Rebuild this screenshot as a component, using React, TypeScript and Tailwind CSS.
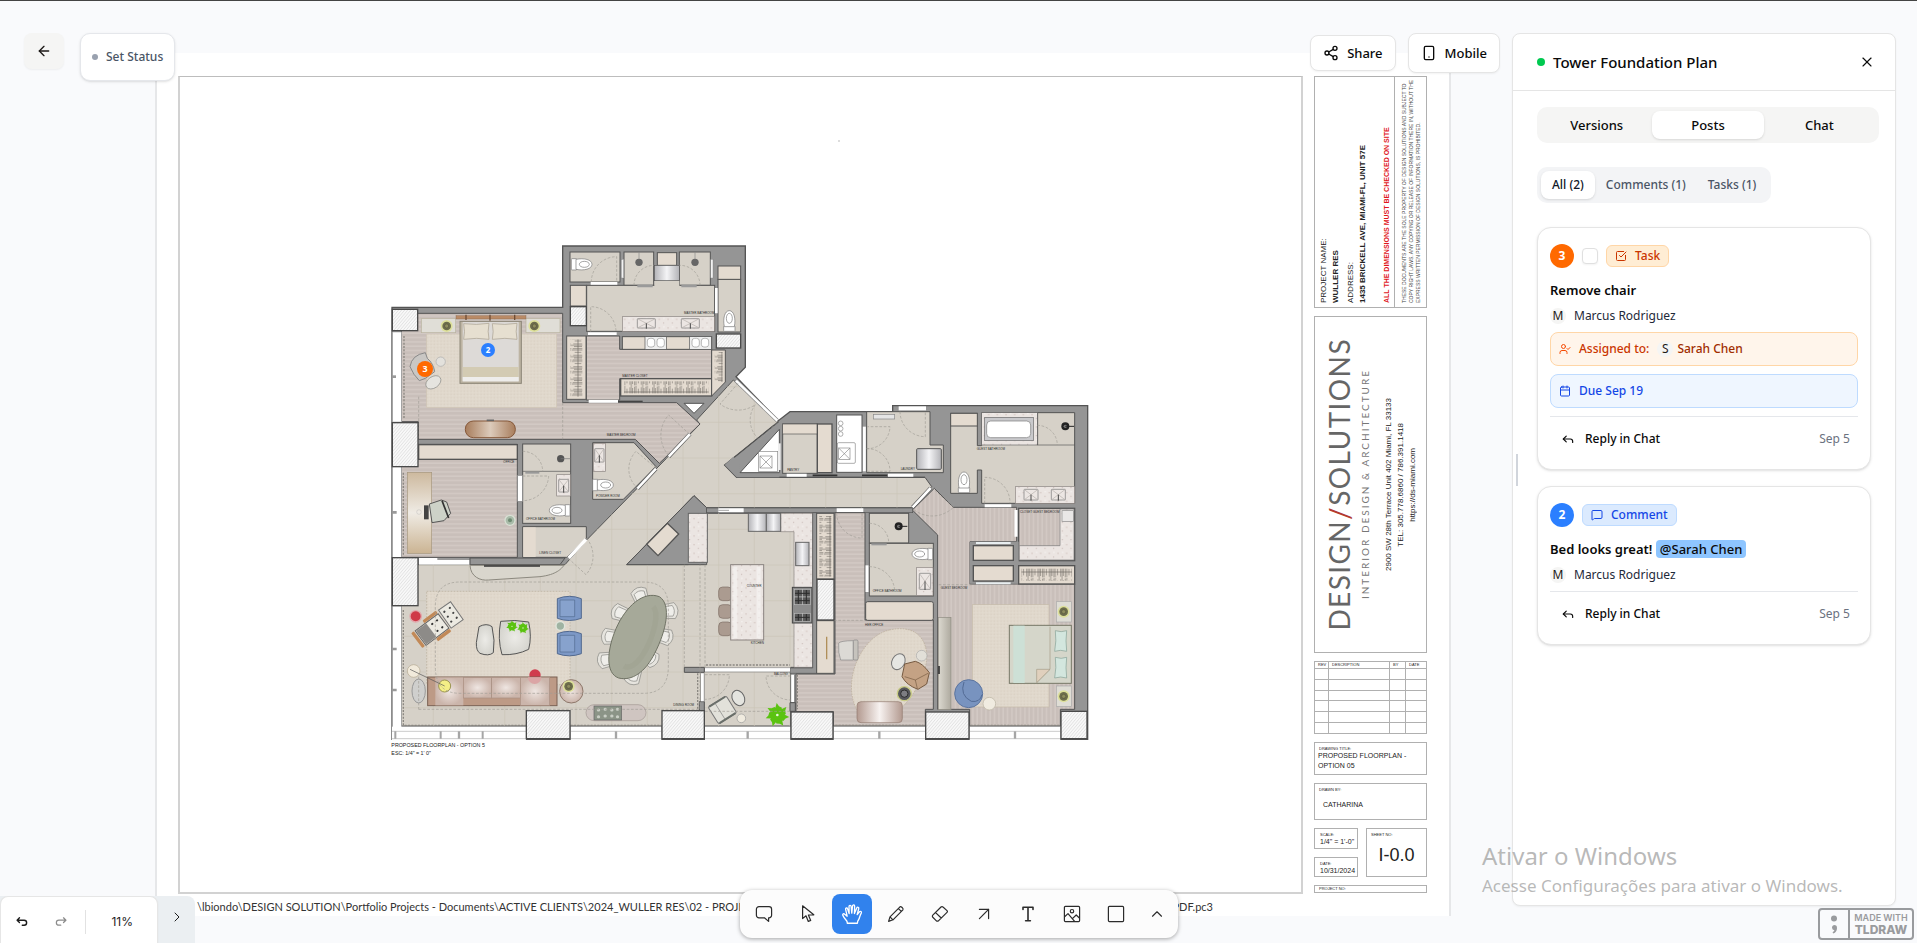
import React from "react";
import {
  ArrowLeft,
  ArrowUpRight,
  Calendar,
  ChevronRight,
  ChevronUp,
  MessageSquare,
  Reply,
  Share2,
  Smartphone,
  SquareCheckBig,
  UserCheck,
  X,
} from "lucide-react";

/* ---------- Floor plan drawing ---------- */

type Pt = [number, number];

const WALL = "#959595";
const LINE = "#545454";
const TILE = "#d6d1c8";
const CREAM = "#e4dbd0";

function Room({ d, fill, w = 3 }: { d: string; fill: string; w?: number }) {
  return <path d={d} fill={fill} stroke={LINE} strokeWidth={w} strokeLinejoin="miter" />;
}

function Box({
  x,
  y,
  w,
  h,
  fill = CREAM,
  s = 3,
  stroke = LINE,
  rx = 0,
}: {
  x: number;
  y: number;
  w: number;
  h: number;
  fill?: string;
  s?: number;
  stroke?: string;
  rx?: number;
}) {
  return <rect x={x} y={y} width={w} height={h} rx={rx} fill={fill} stroke={stroke} strokeWidth={s} />;
}

function Toilet({ x, y, r = 0 }: { x: number; y: number; r?: number }) {
  return (
    <g transform={`translate(${x} ${y}) rotate(${r})`} fill="#fff" stroke="#777" strokeWidth="2">
      <rect x="-17" y="14" width="34" height="16" rx="2" />
      <path d="M-15 16C-20-8-14-32 0-32S20-8 15 16Z" />
      <ellipse cx="0" cy="-9" rx="9" ry="15" />
    </g>
  );
}

function Sink({ x, y, w, h }: { x: number; y: number; w: number; h: number }) {
  return (
    <g fill="#ece6e3" stroke="#777" strokeWidth="2">
      <rect x={x} y={y} width={w} height={h} rx="2" />
      <path d={`M${x} ${y}L${x + w} ${y + h}M${x + w} ${y}L${x} ${y + h}`} stroke="#b5afab" />
      <path d={`M${x + w / 2} ${y + h / 2}v${h / 2 + 2}`} stroke="#444" strokeWidth="3" />
    </g>
  );
}

function Shower({ x, y, c = "#222" }: { x: number; y: number; c?: string }) {
  return (
    <g>
      <circle cx={x} cy={y} r="12" fill={c} />
      <circle cx={x} cy={y} r="5" fill="#777" />
      <path d={`M${x} ${y}h26`} stroke={c} strokeWidth="3" />
    </g>
  );
}

function Lamp({ x, y }: { x: number; y: number }) {
  return (
    <g>
      <circle cx={x} cy={y} r="18" fill="#dde09a" />
      <circle cx={x} cy={y} r="13" fill="#6d6d4c" />
      <circle cx={x} cy={y} r="6" fill="#8d8c5c" stroke="#3a3a2a" />
    </g>
  );
}

function DiningChair({ x, y, r }: { x: number; y: number; r: number }) {
  return (
    <g transform={`translate(${x} ${y}) rotate(${r})`} fill="#e6e4de" stroke="#8a8a86" strokeWidth="2">
      <path d="M-24-14Q0-34 24-14L20 22Q0 30-20 22Z" />
      <path d="M-16-8Q0-18 16-8L14 20H-14Z" fill="#efeeea" />
    </g>
  );
}

function Plant({ x, y, s = 1 }: { x: number; y: number; s?: number }) {
  const leaves = [0, 51, 103, 154, 206, 257, 309];
  return (
    <g transform={`translate(${x} ${y}) scale(${s})`} fill="#5bc311">
      {leaves.map((a) => (
        <path key={a} transform={`rotate(${a})`} d="M-9 0L-14-18L-6-22L-2-37L5-27L14-22L10 0Z" />
      ))}
      <circle r="14" />
      <circle r="4" fill="#e9f7dc" />
    </g>
  );
}

const COLUMNS: [number, number, number, number][] = [
  [37, 238, 76, 64],
  [37, 578, 77, 132],
  [37, 983, 77, 144],
  [439, 1442, 131, 84],
  [846, 1442, 127, 84],
  [1233, 1446, 126, 80],
  [1637, 1446, 130, 80],
  [2043, 1444, 78, 82],
  [571, 230, 48, 57],
  [1009, 312, 73, 42],
  [1311, 1048, 51, 122],
];

const WINDOWS_BOTTOM: [number, number][] = [
  [36, 438],
  [572, 844],
  [975, 1231],
  [1361, 1635],
  [1769, 2041],
];

const LABELS: [number, number, string][] = [
  [680, 618, "MASTER BEDROOM"],
  [912, 253, "MASTER BATHROOM"],
  [727, 442, "MASTER CLOSET"],
  [370, 698, "OFFICE"],
  [438, 870, "OFFICE BATHROOM"],
  [478, 971, "LINEN CLOSET"],
  [648, 800, "POWDER ROOM"],
  [880, 1429, "DINING ROOM"],
  [1112, 1241, "KITCHEN"],
  [1100, 1071, "COUNTER"],
  [1182, 1336, "BALCONY"],
  [1222, 724, "PANTRY"],
  [1562, 719, "LAUNDRY"],
  [1790, 661, "GUEST BATHROOM"],
  [1920, 849, "CLOSET GUEST BEDROOM"],
  [1682, 1078, "GUEST BEDROOM"],
  [1478, 1085, "OFFICE BATHROOM"],
  [1455, 1189, "HER OFFICE"],
];

const DINING: [number, number, number][] = [
  [780, 1096, -20],
  [718, 1148, -70],
  [688, 1220, -85],
  [676, 1290, -100],
  [758, 1340, -160],
  [812, 1285, 125],
  [855, 1220, 105],
  [870, 1143, 85],
];

const DOORS = [
  "M634 156A76 76 0 0 1 710 80V156",
  "M762 166A60 60 0 0 1 822 106",
  "M960 166A60 60 0 0 0 898 106",
  "M632 305V230A76 76 0 0 1 708 305",
  "M928 612L866 555A90 90 0 0 0 866 676",
  "M428 664A60 60 0 0 1 488 724",
  "M428 738H506A78 78 0 0 1 428 812",
  "M828 714L768 664A76 76 0 0 0 770 772",
  "M620 925A84 84 0 0 1 618 1034L566 986",
  "M1074 460L1020 522A90 90 0 0 0 1126 524A76 76 0 0 0 1140 630L1192 576",
  "M1560 545A76 76 0 0 0 1636 620V545",
  "M1460 656A68 68 0 0 0 1530 590H1462M1460 656A68 68 0 0 1 1530 724H1462",
  "M1972 586A60 60 0 0 1 2032 645",
  "M1814 820V742A76 76 0 0 1 1890 820",
  "M1655 772L1720 832A90 90 0 0 1 1598 836",
  "M1370 850A76 76 0 0 0 1446 924V850",
  "M1468 880A58 58 0 0 1 1526 938",
  "M1468 1010A76 76 0 0 1 1544 1082",
  "M975 1334H1048A74 74 0 0 1 975 1408",
  "M1232 1338H1158A74 74 0 0 0 1232 1410",
  "M116 1438H960V1004M913 1004V1312M975 1004V1312",
  "M116 500V628M548 518V628M116 1340V1438",
  "M240 1056H790Q865 1056 865 1130V1310Q865 1390 790 1390H240Q166 1390 166 1310V1130Q166 1056 240 1056",
  "M1362 1171H1455M1676 1064H1780M975 1444H1232",
];

function FloorPlan() {
  const grid: Pt[] = [];
  for (let i = 0; i < 20; i++) grid.push([160 + i * 107, 470 + i * 107]);
  return (
    <svg viewBox="0 0 2160 1620" className="block h-[540px] w-[720px]" role="img" aria-label="Proposed floorplan">
      <defs>
        <pattern id="wood" width="40" height="13" patternUnits="userSpaceOnUse">
          <rect width="40" height="13" fill="#c9bfba" />
          <rect y="9" width="40" height="3" fill="#d8cfca" />
        </pattern>
        <pattern id="woodV" width="13" height="40" patternUnits="userSpaceOnUse">
          <rect width="13" height="40" fill="#c9bfba" />
          <rect x="9" width="3" height="40" fill="#d8cfca" />
        </pattern>
        <pattern id="hatch" width="7" height="7" patternUnits="userSpaceOnUse" patternTransform="rotate(40)">
          <rect width="7" height="7" fill="#f8f8f8" />
          <rect width="2" height="7" fill="#dfdfdf" />
        </pattern>
        <pattern id="rug" width="10" height="10" patternUnits="userSpaceOnUse">
          <rect width="10" height="10" fill="#e0d8cc" />
          <circle cx="3" cy="3" r="1.5" fill="#d5cbbc" />
          <circle cx="8" cy="7" r="1.5" fill="#e8e1d6" />
        </pattern>
        <pattern id="marble" width="26" height="26" patternUnits="userSpaceOnUse">
          <rect width="26" height="26" fill="#ebe5e2" />
          <circle cx="6" cy="8" r="2" fill="#cdbdb8" />
          <circle cx="19" cy="19" r="2" fill="#c7b8b4" />
          <circle cx="20" cy="5" r="2" fill="#f8f5f4" />
        </pattern>
        <pattern id="rail" width="34" height="36" patternUnits="userSpaceOnUse">
          <path d="M2 4v28M6 0v36M10 6v24M16 2v32M20 0v34M27 8v20" stroke="#7d7771" strokeWidth="2" />
          <path d="M0 18h34" stroke="#6b655f" strokeWidth="2" />
        </pattern>
        <pattern id="railV" width="36" height="34" patternUnits="userSpaceOnUse">
          <path d="M4 2h28M0 6h36M6 10h24M2 16h32M0 20h34M8 27h20" stroke="#7d7771" strokeWidth="2" />
          <path d="M18 0v34" stroke="#6b655f" strokeWidth="2" />
        </pattern>
        <linearGradient id="steel">
          <stop offset="0" stopColor="#b3b3b7" />
          <stop offset=".5" stopColor="#f4f4f6" />
          <stop offset="1" stopColor="#b3b3b7" />
        </linearGradient>
        <linearGradient id="walnut">
          <stop offset="0" stopColor="#a87d5c" />
          <stop offset=".5" stopColor="#dccbbb" />
          <stop offset="1" stopColor="#a87d5c" />
        </linearGradient>
        <linearGradient id="desk" x2="0" y2="1">
          <stop offset="0" stopColor="#cdb99e" />
          <stop offset=".5" stopColor="#efebe4" />
          <stop offset="1" stopColor="#cbb493" />
        </linearGradient>
        <linearGradient id="tv">
          <stop offset="0" stopColor="#dcd9d0" />
          <stop offset="1" stopColor="#aeaa9f" />
        </linearGradient>
        <radialGradient id="seat">
          <stop offset="0" stopColor="#efe6e2" />
          <stop offset="1" stopColor="#cbb5ab" />
        </radialGradient>
        <radialGradient id="stone">
          <stop offset="0" stopColor="#ecebe7" />
          <stop offset="1" stopColor="#d6d5cf" />
        </radialGradient>
        <linearGradient id="pouf">
          <stop offset="0" stopColor="#b39a90" />
          <stop offset=".5" stopColor="#f7f2f0" />
          <stop offset="1" stopColor="#b39a90" />
        </linearGradient>
        <clipPath id="mainFloor">
          <path d="M64 1004H555L620 930L960 582L950 570L1060 450L1195 575L1034 705L1070 742H1635L1655 770L1595 833H980L942 797L740 1004H925V850H1298V1312H1232V1488H64Z" />
        </clipPath>
      </defs>

      <Room
        fill={WALL}
        w={4}
        d="M548 48H1096V412L1068 440L1195 572L1230 545H1538V527H2123V1528H36V232H548Z"
      />

      {/* Shared tiled floor */}
      <Room
        fill={TILE}
        d="M64 1004H555L620 930L960 582L950 570L1060 450L1195 575L1034 705L1070 742H1635L1655 770L1595 833H980L942 797L740 1004H925V850H1298V1312H1232V1488H64Z"
      />
      <g clipPath="url(#mainFloor)" stroke="#cbc6b8" strokeWidth="2">
        {grid.map(([gx, gy]) => (
          <path key={gx} d={`M${gx} 430V1500M40 ${gy}H1700`} />
        ))}
      </g>
      <path d="M1195 575L1034 705L1070 742H1635" fill="none" stroke={LINE} strokeWidth="4" />
      <path d="M1034 705L1060 680L1078 696L1080 728H1198V742H1070Z" fill={WALL} />

      {/* Master bedroom */}
      <Room fill="url(#wood)" d="M64 250H548V518H890L960 582L838 700L766 628H115V575H64Z" />
      <rect x="38" y="306" width="26" height="270" fill="#fff" stroke="#aaa" strokeWidth="2" />
      <path d="M36 440h12" stroke="#999" strokeWidth="8" />
      <rect x="140" y="312" width="390" height="220" fill="url(#rug)" stroke="#cfc5b5" strokeWidth="2" />
      <rect x="124" y="266" width="103" height="42" fill="#e0ded7" stroke="#b9b39f" strokeWidth="2" />
      <rect x="438" y="266" width="102" height="42" fill="#e0ded7" stroke="#b9b39f" strokeWidth="2" />
      <rect x="228" y="257" width="210" height="10" fill="#b98a66" stroke="#7b5a40" />
      <path d="M258 254v16M330 254v18M404 254v16" stroke="#6e4d36" strokeWidth="4" />
      <rect x="240" y="274" width="184" height="186" fill="#bdb4a3" stroke="#8b8577" strokeWidth="3" />
      <rect x="248" y="276" width="168" height="178" fill="#dddad7" />
      <rect x="248" y="411" width="168" height="30" fill="#d3cbb3" />
      <rect x="248" y="441" width="168" height="13" fill="#eeedeb" />
      <path d="M251 281Q290 286 327 280Q322 305 327 328Q290 322 251 328Q256 305 251 281Z" fill="#e6dfd0" stroke="#a79f8c" strokeWidth="2" />
      <path d="M337 281Q375 286 411 280Q406 305 411 328Q375 322 337 328Q342 305 337 281Z" fill="#e6dfd0" stroke="#a79f8c" strokeWidth="2" />
      <Lamp x={200} y={288} />
      <Lamp x={463} y={288} />
      <rect x="256" y="573" width="150" height="50" rx="24" fill="url(#walnut)" stroke="#85583a" strokeWidth="3" />
      <path d="M320 571h22" stroke="#666" strokeWidth="5" />
      <path d="M90 410Q95 375 136 368L142 385Q160 400 164 425L136 445L118 452Q100 435 90 410Z" fill="#c9c7c4" stroke="#888" strokeWidth="3" />
      <circle cx="182" cy="395" r="14" fill="#e3e1dc" stroke="#aaa" strokeWidth="2" />
      <ellipse cx="160" cy="457" rx="25" ry="17" transform="rotate(-35 160 457)" fill="#e5e4df" stroke="#8c8c88" strokeWidth="2" />

      {/* Master bathroom */}
      <Box x={570} y={66} w={150} h={90} fill={TILE} />
      <Box x={732} y={66} w={89} h={100} fill={TILE} />
      <Box x={898} y={66} w={93} h={100} fill={TILE} />
      <Box x={620} y={166} w={384} h={138} fill={TILE} />
      <rect x="823" y="150" width="75" height="20" fill={TILE} />
      <Box x={832} y={68} w={58} h={38} />
      <Box x={823} y={106} w={75} h={46} fill="url(#steel)" s={2} />
      <Box x={571} y={166} w={48} h={62} />
      <Box x={1014} y={148} w={68} h={158} fill={TILE} />
      <Box x={1014} y={108} w={68} h={40} />
      <Box x={727} y={260} w={276} h={44} fill="url(#marble)" s={2} stroke="#8a8380" />
      <Sink x={772} y={266} w={54} h={28} />
      <Sink x={904} y={266} w={54} h={28} />
      <Toilet x={604} y={103} r={90} />
      <Toilet x={1048} y={274} />
      <circle cx="777" cy="97" r="11" fill="#666" />
      <circle cx="945" cy="97" r="11" fill="#666" />
      <path d="M777 66v22M945 66v22" stroke="#888" strokeWidth="2" />
      <rect x="724" y="88" width="7" height="56" fill="#f2f2f2" stroke="#777" />
      <rect x="992" y="88" width="7" height="56" fill="#f2f2f2" stroke="#777" />
      <path d="M772 168h46M904 168h46" stroke="#9a9a9a" strokeWidth="7" />
      <path d="M632 160h80M624 311h86M1009 174v76" stroke="#fff" strokeWidth="8" />

      {/* Master closet */}
      <Room fill="url(#wood)" d="M619 318H719V358H995V446H719V510H619Z" />
      <Box x={560} y={318} w={58} h={190} />
      <rect x="571" y="328" width="36" height="172" fill="url(#railV)" />
      <Box x={727} y={320} w={268} h={38} />
      <Box x={795} y={320} w={64} h={38} fill="#eee" s={2} />
      <Box x={928} y={320} w={66} h={38} fill="#eee" s={2} />
      <g fill="#fff" stroke="#999" strokeWidth="2">
        <rect x="802" y="325" width="22" height="26" rx="8" />
        <rect x="831" y="325" width="22" height="26" rx="8" />
        <rect x="936" y="325" width="22" height="26" rx="8" />
        <rect x="964" y="325" width="22" height="26" rx="8" />
      </g>
      <Box x={722} y={446} w={273} h={52} s={4} />
      <rect x="732" y="454" width="254" height="36" fill="url(#rail)" />
      <Room fill={CREAM} d="M995 360H1036V456L995 498Z" />
      <rect x="1004" y="366" width="24" height="90" fill="url(#railV)" />
      <path d="M626 514h88" stroke="#fff" strokeWidth="9" />
      <path d="M714 514h74" stroke="#444" strokeWidth="4" />
      <path d="M912 520H972L942 550Z" fill="#fff" stroke={LINE} strokeWidth="3" />
      <path d="M1068 452L1192 572" stroke="#888" strokeWidth="12" />
      <path d="M1068 452L1192 572" stroke="#fff" strokeWidth="8" />
      <path d="M866 680L930 612" stroke={LINE} strokeWidth="12" />
      <path d="M866 680L930 612" stroke="#fff" strokeWidth="8" />

      {/* Office */}
      <Room fill="url(#wood)" d="M64 643H412V982H64Z" />
      <rect x="38" y="710" width="26" height="272" fill="#fff" stroke="#aaa" strokeWidth="2" />
      <Box x={116} y={644} w={296} h={44} s={4} />
      <rect x="82" y="727" width="73" height="243" fill="url(#desk)" stroke="#a5967d" strokeWidth="2" />
      <path d="M132 826h14v42h-14Z" fill="#444" />
      <circle cx="117" cy="846" r="7" fill="none" stroke="#aaa" />
      <path d="M148 822L184 810L200 816L212 850L192 872L156 878Z" fill="#cdd2c8" stroke="#555" strokeWidth="3" />
      <path d="M186 812L206 864" stroke="#333" strokeWidth="5" />
      <circle cx="390" cy="871" r="15" fill="#a9bba9" stroke="#d8e0d4" strokeWidth="4" />
      <circle cx="390" cy="871" r="6" fill="#6f8c73" />
      <rect x="117" y="984" width="152" height="20" fill="#fff" />
      <path d="M172 987h146" stroke="#777" strokeWidth="5" />

      {/* Office bathroom, linen closet, powder room */}
      <Box x={428} y={642} w={144} h={238} fill={TILE} />
      <path d="M428 724h144" stroke={LINE} strokeWidth="2" />
      <circle cx="542" cy="686" r="11" fill="#555" />
      <path d="M542 686h30" stroke="#777" strokeWidth="2" />
      <Box x={530} y={734} w={41} h={64} fill="url(#marble)" s={2} stroke="#8a8380" />
      <Sink x={536} y={748} w={30} h={38} />
      <Toilet x={540} y={841} r={-90} />
      <rect x="413" y="736" width="14" height="78" fill="#fff" stroke="#888" strokeWidth="2" />
      <path d="M436 728h42" stroke="#999" strokeWidth="6" />
      <Room fill={TILE} d="M428 890H619V925L560 982H428Z" />
      <rect x="430" y="892" width="37" height="89" fill={CREAM} />
      <path d="M566 984L618 928" stroke="#fff" strokeWidth="10" />
      <Room fill={TILE} d="M638 638H762L828 710L730 808H638Z" />
      <Box x={640} y={640} w={36} h={84} fill="url(#marble)" s={2} stroke="#8a8380" />
      <Sink x={644} y={656} w={28} h={40} />
      <Toilet x={668} y={765} r={90} />
      <path d="M772 776L828 716" stroke={LINE} strokeWidth="12" />
      <path d="M772 776L828 716" stroke="#fff" strokeWidth="8" />

      {/* Wedge by the kitchen */}
      <Room fill={WALL} d="M942 797L740 1004H980V833Z" />
      <Room fill={CREAM} w={4} d="M862 880L896 912L834 977L800 943Z" />
      <Box x={925} y={850} w={57} h={147} fill="url(#marble)" s={3} stroke="#666" />
      <path d="M270 1004V984H555L540 1004Z" fill={WALL} stroke={LINE} strokeWidth="3" />
      <path d="M270 1006C272 1040 300 1053 326 1050L480 1040C530 1034 544 1016 552 1006Z" fill="#d9d6cd" stroke="#8c897f" strokeWidth="3" />
      <path d="M312 1008h168" stroke="#333" strokeWidth="5" />

      {/* Living room */}
      <rect x="38" y="1128" width="26" height="400" fill="#fff" stroke="#aaa" strokeWidth="2" />
      <path d="M36 847h14M36 1257h14M36 1380h14" stroke="#999" strokeWidth="8" />
      <rect x="140" y="1084" width="430" height="280" fill="url(#rug)" stroke="#b8ae9c" strokeWidth="2" strokeDasharray="5 4" />
      <circle cx="107" cy="1159" r="17" fill="#cf3a48" stroke="#e2a8ac" strokeWidth="4" />
      <g transform="rotate(-37 158 1196)">
        <rect x="112" y="1170" width="86" height="54" fill="#eceae2" stroke="#666" strokeWidth="3" />
        <rect x="148" y="1158" width="50" height="10" rx="3" fill="#c28957" />
        <rect x="148" y="1226" width="50" height="10" rx="3" fill="#c28957" />
        <rect x="98" y="1168" width="10" height="56" rx="3" fill="#c28957" />
        <rect x="114" y="1172" width="38" height="50" fill="#8d8b88" />
        <path d="M165 1184h1M183 1184h1M165 1210h1M183 1210h1" stroke="#333" strokeWidth="6" strokeLinecap="round" />
      </g>
      <g transform="rotate(-35 212 1154)">
        <rect x="190" y="1122" width="44" height="66" fill="#eceae2" stroke="#777" strokeWidth="3" />
        <path d="M201 1136h1M221 1136h1M201 1154h1M221 1154h1M201 1172h1M221 1172h1" stroke="#444" strokeWidth="6" strokeLinecap="round" />
      </g>
      <path d="M297 1190Q320 1178 336 1190Q346 1232 340 1268Q326 1280 300 1270Q288 1262 289 1238Z" fill="url(#stone)" stroke="#555" strokeWidth="3" />
      <path d="M362 1174Q405 1168 446 1176Q456 1220 446 1258Q410 1276 366 1274Q352 1226 362 1174Z" fill="url(#stone)" stroke="#555" strokeWidth="3" />
      <Plant x={396} y={1189} s={0.48} />
      <Plant x={429} y={1194} s={0.48} />
      <g fill="#7c98c6" stroke="#52698f" strokeWidth="3">
        <path d="M532 1106Q568 1092 604 1106V1165Q568 1178 532 1165Z" />
        <path d="M532 1211Q568 1197 604 1211V1271Q568 1284 532 1271Z" />
        <path d="M540 1110H584V1160H540ZM540 1216H584V1266H540Z" fill="#87a2cd" strokeWidth="2" />
      </g>
      <circle cx="541" cy="1188" r="13" fill="#9fb3a2" stroke="#dfe5dc" strokeWidth="4" />
      <circle cx="465" cy="1335" r="17" fill="#d03c4d" />
      <rect x="143" y="1341" width="388" height="86" fill="#bd9a86" stroke="#7a6153" strokeWidth="3" />
      <rect x="166" y="1342" width="84" height="84" fill="url(#seat)" />
      <rect x="250" y="1342" width="85" height="62" fill="url(#seat)" stroke="#a88f82" strokeWidth="2" />
      <rect x="335" y="1342" width="86" height="62" fill="url(#seat)" stroke="#a88f82" strokeWidth="2" />
      <rect x="421" y="1342" width="88" height="84" fill="url(#seat)" stroke="#a88f82" strokeWidth="2" />
      <path d="M444 1342A20 20 0 0 0 484 1342Z" fill="#dba5a5" />
      <circle cx="194" cy="1368" r="18" fill="#f4ee86" stroke="#9b9552" strokeWidth="3" />
      <circle cx="101" cy="1323" r="19" fill="#f1eadb" stroke="#b3a88f" strokeWidth="2" />
      <path d="M90 1318L194 1368" stroke="#555" strokeWidth="2" />
      <ellipse cx="116" cy="1383" rx="20" ry="36" fill="#cfcfcd" stroke="#999" strokeWidth="3" />
      <circle cx="574" cy="1384" r="35" fill="url(#seat)" stroke="#8d776a" strokeWidth="3" />
      <Lamp x={566} y={1369} />
      <rect x="618" y="1424" width="180" height="48" rx="24" fill="#cfc5c1" stroke="#a29793" strokeWidth="2" />
      <rect x="642" y="1428" width="83" height="42" fill="#8b9487" stroke="#666" strokeWidth="2" />
      <path d="M655 1440h1M675 1438h1M695 1440h1M712 1438h1M655 1460h1M675 1458h1M695 1458h1M712 1460h1" stroke="#c9cec5" strokeWidth="9" strokeLinecap="round" />

      {/* Dining table */}
      {DINING.map(([x, y, r]) => (
        <DiningChair key={`${x}-${y}`} x={x} y={y} r={r} />
      ))}
      <path d="M838 1100C876 1124 858 1204 824 1270C796 1326 756 1354 716 1344C676 1330 680 1262 708 1196C738 1128 790 1082 838 1100Z" fill="#a6a999" stroke="#6f7264" strokeWidth="3" />
      <path d="M820 1130C838 1150 822 1214 796 1262C772 1304 748 1318 732 1308" fill="none" stroke="#9a9d8d" strokeWidth="16" opacity=".35" />

      {/* Kitchen */}
      <rect x="980" y="834" width="618" height="14" fill={WALL} stroke={LINE} strokeWidth="2" />
      <path d="M1015 841h76M1370 841h80" stroke="#fff" strokeWidth="12" />
      <path d="M1015 841h32" stroke="#777" strokeWidth="2" />
      <path d="M1242 850H1298V1312H1242V905H1202V850Z" fill="url(#marble)" stroke="#8a8380" strokeWidth="2" />
      <Box x={1105} y={850} w={54} h={54} fill="url(#steel)" s={3} stroke="#666" />
      <Box x={1159} y={850} w={43} h={54} fill="url(#steel)" s={3} stroke="#666" />
      <Box x={1247} y={937} w={40} h={70} fill="url(#steel)" s={3} stroke="#666" />
      <Box x={1237} y={1072} w={59} h={107} fill="#8c8c8c" s={3} stroke="#444" />
      <g fill="#5b5b5b" stroke="#bbb" strokeWidth="2">
        <rect x="1243" y="1078" width="24" height="23" />
        <rect x="1267" y="1078" width="24" height="23" />
        <rect x="1243" y="1101" width="24" height="23" />
        <rect x="1267" y="1101" width="24" height="23" />
        <rect x="1243" y="1150" width="24" height="24" />
        <rect x="1267" y="1150" width="24" height="24" />
      </g>
      <path d="M1255 1080v42M1279 1080v42M1255 1152v20M1279 1152v20M1245 1090h44M1245 1112h44M1245 1162h44" stroke="#2c2c2c" strokeWidth="3" />
      <g fill="#ab9b90" stroke="#7b6d64" strokeWidth="2">
        <rect x="1016" y="1071" width="40" height="41" rx="12" />
        <rect x="1016" y="1124" width="40" height="41" rx="12" />
        <rect x="1016" y="1176" width="40" height="41" rx="12" />
      </g>
      <Box x={1052} y={1004} w={99} h={226} fill="url(#marble)" s={3} stroke="#8a8380" />
      <path d="M1066 1010v214M1136 1010v214" stroke="#f8f6f5" strokeWidth="12" opacity=".6" />
      <path d="M1298 848H1310V1330H1230V1314H1298Z" fill={WALL} stroke={LINE} strokeWidth="2" />
      <path d="M913 1312H973V1327H913ZM958 1415H973V1444H958ZM1230 1418H1246V1444H1230Z" fill={WALL} stroke={LINE} strokeWidth="3" />
      <path d="M975 1319H1230" stroke="#fff" strokeWidth="12" />
      <path d="M975 1313H1230M975 1326H1230" stroke="#888" strokeWidth="2" />
      <path d="M967 1330V1414M1238 1334V1416" stroke="#777" strokeWidth="13" />
      <path d="M967 1330V1414M1238 1334V1416" stroke="#fff" strokeWidth="9" />

      {/* Balcony */}
      <g transform="rotate(-32 1026 1438)">
        <rect x="994" y="1410" width="64" height="60" rx="6" fill="#e2e1da" stroke="#777" strokeWidth="3" />
        <path d="M998 1411H1054M998 1469H1054" stroke="#6a6f6a" strokeWidth="6" />
        <path d="M1018 1412V1468" stroke="#888" strokeWidth="2" />
      </g>
      <ellipse cx="1075" cy="1404" rx="18" ry="24" transform="rotate(-28 1075 1404)" fill="#e4e4df" stroke="#666" strokeWidth="3" />
      <circle cx="1084" cy="1465" r="13" fill="#f0ebdf" stroke="#999" strokeWidth="2" />
      <Plant x={1192} y={1455} s={0.98} />

      {/* Pantry and laundry */}
      <Room fill="#fff" d="M1080 728L1198 598V728Z" />
      <g fill="none" stroke="#888" strokeWidth="2">
        <rect x="1135" y="664" width="58" height="60" />
        <rect x="1140" y="678" width="36" height="36" />
        <path d="M1140 678L1176 714M1176 678L1140 714" />
      </g>
      <path d="M1198 640v80" stroke="#eee" strokeWidth="8" />
      <Box x={1208} y={582} w={104} h={148} fill={TILE} />
      <Box x={1208} y={582} w={104} h={30} s={2} />
      <Box x={1312} y={582} w={44} h={146} s={4} />
      <Box x={1370} y={555} w={76} h={172} fill="#fff" />
      <g fill="none" stroke="#888" strokeWidth="2">
        <circle cx="1382" cy="580" r="7" />
        <circle cx="1382" cy="596" r="7" />
        <circle cx="1382" cy="612" r="7" />
        <rect x="1372" y="638" width="54" height="62" rx="4" />
        <rect x="1376" y="654" width="34" height="34" />
        <path d="M1376 654L1410 688M1410 654L1376 688" />
      </g>
      <Room fill={TILE} d="M1460 545H1650V645H1690V728H1460Z" />
      <path d="M1453 590v134" stroke="#fff" strokeWidth="9" />
      <rect x="1480" y="553" width="64" height="14" fill="#e5e5e5" stroke="#888" strokeWidth="2" />
      <Box x={1610} y={656} w={74} h={62} fill="url(#steel)" s={3} stroke="#555" rx={3} />
      <path d="M1556 535h82" stroke="#fff" strokeWidth="12" />
      <path d="M1220 736h60M1524 736h76" stroke="#fff" strokeWidth="9" />
      <path d="M1298 736h74M1446 736h76" stroke="#333" strokeWidth="5" />
      <path d="M1598 832L1652 774" stroke={LINE} strokeWidth="12" />
      <path d="M1598 832L1652 774" stroke="#fff" strokeWidth="8" />

      {/* Guest bathroom */}
      <Room fill={TILE} d="M1712 550H1792V647H1805V548H2084V820H1805V720H1792V790H1712Z" />
      <Box x={1712} y={550} w={80} h={38} />
      <Box x={1805} y={548} w={168} h={97} fill="url(#marble)" s={2} stroke="#666" />
      <Box x={1814} y={562} w={146} h={70} fill="#c9c9cc" s={2} stroke="#666" />
      <rect x="1820" y="573" width="132" height="50" rx="12" fill="#fff" stroke="#777" strokeWidth="2" />
      <path d="M1973 548v97h111" fill="none" stroke={LINE} strokeWidth="2" />
      <Shower x={2056} y={589} />
      <Toilet x={1752} y={758} />
      <Box x={1906} y={770} w={178} h={50} fill="url(#marble)" s={2} stroke="#8a8380" />
      <Sink x={1932} y={778} w={42} h={32} />
      <Sink x={2014} y={778} w={42} h={32} />

      {/* Guest bedroom */}
      <Room
        fill="url(#woodV)"
        d="M1663 775L1720 832H1910V935H1770V1062H2084V1438H2041V1488H1769V1438H1673V915L1597 840Z"
      />
      <path d="M1814 827h80M1908 840v80" stroke="#fff" strokeWidth="9" />
      <Box x={1916} y={835} w={168} h={157} fill="url(#woodV)" s={4} />
      <path d="M2040 837H2082V990H1918V947H2040Z" fill="url(#marble)" stroke="#777" strokeWidth="2" />
      <rect x="2046" y="842" width="34" height="32" fill="#e9e7e6" stroke="#888" strokeWidth="2" />
      <rect x="1770" y="935" width="146" height="126" fill={WALL} />
      <Box x={1780} y={947} w={120} h={44} s={4} />
      <Box x={1780} y={1007} w={120} h={46} s={4} />
      <path d="M1788 939h104M1788 1060h104" stroke="#e8eef0" strokeWidth="6" />
      <Box x={1916} y={1007} w={168} h={55} s={4} />
      <rect x="1924" y="1016" width="152" height="36" fill="url(#rail)" />
      <rect x="1777" y="1124" width="230" height="307" fill="url(#rug)" stroke="#c5bba9" strokeWidth="2" />
      <rect x="1675" y="1162" width="38" height="277" fill="url(#tv)" stroke="#8d8a80" strokeWidth="2" />
      <path d="M1677 1308v24" stroke="#333" strokeWidth="5" />
      <rect x="2029" y="1115" width="45" height="61" fill="#dfddd5" stroke="#aaa" strokeWidth="2" />
      <rect x="2029" y="1368" width="45" height="61" fill="#dfddd5" stroke="#aaa" strokeWidth="2" />
      <Lamp x={2051} y={1145} />
      <Lamp x={2051} y={1399} />
      <rect x="1888" y="1186" width="186" height="174" fill="#d5d6ca" stroke="#777868" strokeWidth="3" />
      <rect x="1900" y="1187" width="34" height="172" fill="#cde0d6" />
      <g fill="#d3e6de" stroke="#84a096" strokeWidth="2">
        <path d="M2026 1202Q2044 1208 2060 1202Q2056 1232 2060 1264Q2042 1258 2024 1264Q2030 1232 2026 1202Z" />
        <path d="M2026 1282Q2044 1288 2060 1282Q2056 1312 2060 1344Q2042 1338 2024 1344Q2030 1312 2026 1282Z" />
      </g>
      <path d="M2010 1190V1318L1970 1358" fill="none" stroke="#a39c87" strokeWidth="2" />
      <path d="M1970 1318H2010L1970 1358Z" fill="#e0d0bd" stroke="#a39c87" strokeWidth="2" />
      <circle cx="1766" cy="1391" r="42" fill="#7893bf" stroke="#5b749f" strokeWidth="3" />
      <path d="M1752 1356Q1738 1396 1774 1414Q1800 1418 1806 1394" fill="none" stroke="#536b95" strokeWidth="3" />
      <circle cx="1828" cy="1421" r="19" fill="#f0ebe0" stroke="#b8b0a0" strokeWidth="2" />

      {/* Second office */}
      <Room fill="url(#wood)" d="M1365 848H1455V1170H1660V1438H1636V1488H1360V1445H1248V1332H1365Z" />
      <Box x={1310} y={850} w={52} h={197} />
      <rect x="1318" y="858" width="36" height="182" fill="url(#railV)" />
      <Box x={1310} y={1172} w={52} h={158} />
      <path d="M1340 1220v68" stroke="#b08f5a" strokeWidth="4" />
      <Box x={1468} y={850} w={118} h={89} fill={TILE} />
      <Box x={1468} y={940} w={192} h={158} fill={TILE} />
      <Shower x={1556} y={889} />
      <Toilet x={1628} y={972} r={-90} />
      <Box x={1610} y={1012} w={49} h={84} fill="url(#marble)" s={2} stroke="#8a8380" />
      <Sink x={1618} y={1030} w={34} h={48} />
      <path d="M1461 1006v80" stroke="#fff" strokeWidth="9" />
      <path d="M1474 943h46" stroke="#999" strokeWidth="6" />
      <Box x={1457} y={1115} w={203} h={56} rx={6} />
      <path d="M1528 1200C1590 1186 1634 1210 1640 1270C1644 1330 1600 1400 1560 1438H1430C1404 1390 1412 1320 1444 1268C1466 1232 1494 1208 1528 1200Z" fill="url(#rug)" stroke="#b9ac97" strokeWidth="2" strokeDasharray="5 3" />
      <path d="M1376 1240Q1380 1232 1420 1232V1290H1382Q1374 1270 1376 1240Z" fill="#dcdad5" stroke="#888" strokeWidth="2" />
      <rect x="1420" y="1230" width="14" height="60" rx="4" fill="#c6c3bd" stroke="#888" strokeWidth="2" />
      <ellipse cx="1555" cy="1295" rx="19" ry="25" transform="rotate(28 1555 1295)" fill="#e6e6e2" stroke="#777" strokeWidth="3" />
      <circle cx="1625" cy="1277" r="16" fill="#e2dfd8" stroke="#aaa" strokeWidth="2" />
      <path d="M1574 1302L1606 1294Q1628 1300 1648 1328L1640 1362L1614 1378Q1580 1366 1566 1340Z" fill="#c4a284" stroke="#765a41" strokeWidth="3" />
      <path d="M1574 1340L1606 1350L1612 1376M1606 1350L1644 1330" fill="none" stroke="#765a41" strokeWidth="2" />
      <circle cx="1573" cy="1391" r="21" fill="#57575c" stroke="#c9cc86" strokeWidth="4" />
      <circle cx="1573" cy="1391" r="11" fill="#7d7d82" stroke="#2c2c2c" strokeWidth="3" />
      <rect x="1431" y="1415" width="136" height="63" rx="12" fill="url(#pouf)" stroke="#927a6f" strokeWidth="2" />

      {/* Door swings and dashed guides */}
      <g fill="none" stroke="#a09d95" strokeWidth="2" strokeDasharray="8 5">
        {DOORS.map((d) => (
          <path key={d} d={d} />
        ))}
      </g>

      {/* Curtains */}
      <g fill="none" stroke="#8a8781" strokeWidth="4" strokeDasharray="6 4">
        <path d="M72 318V568M70 728V974M70 1140V1486H438M572 1486H844M953 1330V1436M978 1305H1230M1252 1334V1438M1366 1486H1630M1772 1486H2038" />
      </g>

      {/* Perimeter windows */}
      {WINDOWS_BOTTOM.map(([a, b]) => (
        <g key={a}>
          <rect x={a} y="1490" width={b - a} height="40" fill="#fff" />
          <path d={`M${a} 1504H${b}M${a} 1526H${b}`} stroke="#b0b0b0" strokeWidth="2" />
          <path d={`M${(a + b) / 2} 1504v22`} stroke="#a5a5a5" strokeWidth="7" />
        </g>
      ))}
      <path d="M182 1504v22M308 1504v22M46 1504v22" stroke="#a5a5a5" strokeWidth="6" />

      {COLUMNS.map(([x, y, w, h]) => (
        <rect key={`${x}-${y}`} x={x} y={y} width={w} height={h} fill="url(#hatch)" stroke="#4a4a4a" strokeWidth="4" />
      ))}

      <g fill="#2a2a2a" fontFamily="'Liberation Sans', Arial, sans-serif" fontSize="9">
        {LABELS.map(([x, y, t]) => (
          <text key={`${x}-${t}`} x={x} y={y}>
            {t}
          </text>
        ))}
      </g>
      <g fill="#222" fontFamily="'Liberation Sans', Arial, sans-serif" fontSize="16">
        <text x="34" y="1551">PROPOSED FLOORPLAN - OPTION 5</text>
        <text x="34" y="1574">ESC: 1/4&quot; = 1&apos; 0&quot;</text>
      </g>
    </svg>
  );
}

/* ---------- Drawing sheet ---------- */

const vertical = "rotate-180 whitespace-nowrap [writing-mode:vertical-rl]";

function TitleBlock() {
  return (
    <div className="flex w-[113px] shrink-0 flex-col gap-2 font-['Liberation_Sans',Arial,sans-serif] text-[#222]">
      <section className="flex h-[232px] border border-[#b0b0b0] pb-1 pl-[3px] text-[8px] leading-3">
        <p className={vertical}>PROJECT NAME:</p>
        <p className={`${vertical} font-bold`}>WULLER RES</p>
        <p className={`${vertical} ml-[3px]`}>ADDRESS:</p>
        <p className={`${vertical} font-bold`}>1435 BRICKELL AVE, MIAMI-FL, UNIT 57E</p>
        <p className={`${vertical} ml-3 text-[7px] font-bold text-[#e0161c]`}>ALL THE DIMENSIONS MUST BE CHECKED ON SITE</p>
        <div className="-mb-1 ml-px flex border-l border-[#b0b0b0] pb-1 pl-[6px] text-[5px] leading-[7px] text-[#444]">
          <p className={vertical}>THESE DOCUMENTS ARE THE SOLE PROPERTY OF DESIGN SOLUTIONS AND SUBJECT TO</p>
          <p className={vertical}>COPY RIGHT LAWS. ANY COPYING OR RELEASE OF INFORMATION THERE IN, WITHOUT THE</p>
          <p className={vertical}>EXPRESS WRITTEN PERMISSION OF DESIGN SOLUTIONS, IS PROHIBITED.</p>
        </div>
      </section>

      <section className="flex h-[337px] items-center border border-[#b0b0b0] pl-2 text-[8px] leading-3">
        <p className={`${vertical} font-['Lato',sans-serif] text-[28px] leading-8 tracking-wider text-[#666]`}>
          DESIGN<span className="text-[#b3392f]">/</span>SOLUTIONS
        </p>
        <p className={`${vertical} ml-1 font-['Lato',sans-serif] text-[10px] tracking-[2px] text-[#777]`}>
          INTERIOR DESIGN &amp; ARCHITECTURE
        </p>
        <p className={`${vertical} ml-3`}>2900 SW 28th Terrace Unit 402 Miami, FL 33133</p>
        <p className={vertical}>TEL: 305.778.6860 / 786.391.1418</p>
        <p className={vertical}>https://ds-miami.com</p>
      </section>

      <table className="h-[73px] w-full table-fixed border-collapse text-left text-[4px] leading-[6px] [&_td]:border [&_td]:border-[#b0b0b0] [&_td]:p-0 [&_th]:border [&_th]:border-[#b0b0b0] [&_th]:p-0 [&_th]:pl-[3px] [&_th]:font-normal">
        <colgroup>
          <col className="w-[14px]" />
          <col />
          <col className="w-[16px]" />
          <col className="w-[21px]" />
        </colgroup>
        <thead>
          <tr>
            <th>REV</th>
            <th>DESCRIPTION</th>
            <th>BY</th>
            <th>DATE</th>
          </tr>
        </thead>
        <tbody>
          {[1, 2, 3, 4, 5, 6].map((r) => (
            <tr key={r}>
              <td />
              <td />
              <td />
              <td />
            </tr>
          ))}
        </tbody>
      </table>

      <section className="h-[33px] border border-[#b0b0b0] pl-[3px] pt-[3px]">
        <p className="pl-px text-[4px] leading-[5px]">DRAWING TITLE:</p>
        <p className="text-[7px] leading-[10px]">
          PROPOSED FLOORPLAN -
          <br />
          OPTION 05
        </p>
      </section>

      <section className="h-[37px] border border-[#b0b0b0] pl-1 pt-[3px]">
        <p className="text-[4px] leading-[5px]">DRAWN BY:</p>
        <p className="mt-2 pl-1 text-[7px] leading-[10px]">CATHARINA</p>
      </section>

      <div className="flex h-[49px] gap-2">
        <div className="flex w-11 flex-col gap-2 text-[7px] leading-[9px]">
          <section className="flex-1 border border-[#b0b0b0] pl-[5px] pt-[3px]">
            <p className="text-[4px] leading-[5px]">SCALE:</p>
            <p className="whitespace-nowrap">1/4&quot; = 1&apos;-0&quot;</p>
          </section>
          <section className="flex-1 border border-[#b0b0b0] pl-[5px] pt-[3px]">
            <p className="text-[4px] leading-[5px]">DATE:</p>
            <p>10/31/2024</p>
          </section>
        </div>
        <section className="flex-1 border border-[#b0b0b0] pt-[3px]">
          <p className="pl-1 text-[4px] leading-[5px]">SHEET NO:</p>
          <p className="mt-[6px] text-center text-[18px] leading-6">I-0.0</p>
        </section>
      </div>

      <section className="h-2 border border-[#b0b0b0] pl-1">
        <p className="text-[4px] leading-[6px]">PROJECT NO:</p>
      </section>
    </div>
  );
}

function Sheet() {
  return (
    <div className="absolute left-[155px] top-[52px] w-[1296px] border-x-2 border-[#e6e7e9] bg-white pl-[21px] pr-[22px] pt-[23px]">
      <div className="flex gap-[11px]">
        <div className="h-[818px] flex-1 border-2 border-t border-[#d2d2d2] border-t-[#bdbdbd] pl-[200px] pt-[153px]">
          <figure className="relative w-[720px]">
            <FloorPlan />
            <button
              type="button"
              aria-label="Open task 3"
              className="absolute left-[37px] top-[131px] flex size-4 items-center justify-center rounded-full bg-[#ff6900] text-[9px] font-bold text-white"
            >
              3
            </button>
            <button
              type="button"
              aria-label="Open comment 2"
              className="absolute left-[101px] top-[113px] flex size-[14px] items-center justify-center rounded-full bg-[#2b7fff] text-[8px] font-bold text-white"
            >
              2
            </button>
          </figure>
        </div>
        <TitleBlock />
      </div>
      <div className="flex justify-between whitespace-nowrap pl-[19px] pr-[214px] pt-1 font-['Lato','Noto_Sans',sans-serif] text-[11px] leading-[18px] text-[#333]">
        <span>
          \lbiondo\DESIGN SOLUTION\Portfolio Projects - Documents\ACTIVE CLIENTS\2024_WULLER RES\02 - PROJECT\04 - XRE
        </span>
        <span>PDF.pc3</span>
      </div>
    </div>
  );
}

/* ---------- Editor toolbar ---------- */

function Glyph({ children, size = 20 }: { children: React.ReactNode; size?: number }) {
  return (
    <svg
      width={size}
      height={size}
      viewBox="0 0 20 20"
      fill="none"
      stroke="currentColor"
      strokeWidth="1.2"
      strokeLinecap="round"
      strokeLinejoin="round"
      aria-hidden="true"
    >
      {children}
    </svg>
  );
}

const TOOLS: { name: string; icon: React.ReactNode; active?: boolean }[] = [
  {
    name: "Comment",
    icon: (
      <Glyph>
        <path d="M5 2.6h10a2.6 2.6 0 0 1 2.6 2.6v6a2.6 2.6 0 0 1-2.6 2.6h-.4V17.4L10.4 13.8H5a2.6 2.6 0 0 1-2.6-2.6v-6A2.6 2.6 0 0 1 5 2.6Z" />
      </Glyph>
    ),
  },
  {
    name: "Select",
    icon: (
      <Glyph>
        <path d="M4.6 1.8V14.6l3.4-2.8 2.3 5.6 2.4-1-2.3-5.4 5.4-.2Z" />
      </Glyph>
    ),
  },
  {
    name: "Hand",
    active: true,
    icon: (
      <Glyph size={22}>
        <path d="M5.8 18.4 5.4 16.6C3.6 14.6 2.2 12.800 1.600 11.200c-.4-1.300.900-1.900 1.800-1L5.600 12 4.200 5.800c-.3-1.400 1.400-1.800 1.800-.5L7.400 9.600 7.300 3.200c0-1.400 1.800-1.500 1.900-.1L9.800 9.200 10.500 2.700c.1-1.400 2-1.200 1.900.2L12.200 9.600 14.300 4.500c.6-1.300 2.200-.6 1.800.7L14.700 10.600 16.800 8c.9-1 2.200 0 1.600 1.200-1.200 2.200-1.400 3.600-2 5.200-.4 1-.8 1.500-1.200 2.200l-.3 1.800Z" />
      </Glyph>
    ),
  },
  {
    name: "Draw",
    icon: (
      <Glyph>
        <path d="M2.6 17.4 4 12.8 14 2.8c.9-.8 3.8 1.8 2.900 3L7 15.800Z M4 12.800 7 15.800 M12.400 4.600 15.300 7.400" />
      </Glyph>
    ),
  },
  {
    name: "Eraser",
    icon: (
      <Glyph>
        <path d="M11 3 2.8 11.2a1.4 1.4 0 0 0 0 2L6.4 16.8a1.4 1.4 0 0 0 2 0L17 8.400a1.200 1.200 0 0 0 0-1.800L13 3a1.400 1.400 0 0 0-2 0ZM5.600 8.600 11.200 14" />
      </Glyph>
    ),
  },
  { name: "Arrow", icon: <ArrowUpRight size={22} strokeWidth={1.3} /> },
  {
    name: "Text",
    icon: (
      <Glyph>
        <path d="M5 5.400V3.200h10v2.200M10 3.200V16.800M7.600 16.800h4.800" strokeWidth="1.6" />
      </Glyph>
    ),
  },
  {
    name: "Image",
    icon: (
      <Glyph>
        <rect x="2.4" y="2.4" width="15.2" height="15.2" rx="1" />
        <circle cx="10" cy="7.2" r="1.7" />
        <path d="M2.6 12.800 6 9.600 12.600 17.400M10.400 14.600 14.200 11 17.400 14" />
      </Glyph>
    ),
  },
  {
    name: "Rectangle",
    icon: (
      <Glyph>
        <rect x="2.4" y="2.4" width="15.2" height="15.2" rx="1" />
      </Glyph>
    ),
  },
];

function Toolbar() {
  return (
    <div className="mb-[5px] flex h-12 items-center gap-1 rounded-xl bg-[#fcfcfc] px-1 shadow-[0_1px_4px_rgba(0,0,0,0.35)]">
      {TOOLS.map((t) => (
        <button
          key={t.name}
          type="button"
          aria-label={t.name}
          aria-pressed={!!t.active}
          className={
            t.active
              ? "flex size-10 items-center justify-center rounded-lg bg-[#3182ed] text-white"
              : "flex size-10 items-center justify-center rounded-lg text-[#2b2b2b]"
          }
        >
          {t.icon}
        </button>
      ))}
      <button type="button" aria-label="More tools" className="flex h-10 w-[34px] items-center justify-center text-[#2b2b2b]">
        <ChevronUp size={18} strokeWidth={1.5} />
      </button>
    </div>
  );
}

function ZoomControls() {
  return (
    <div className="flex h-[47px] w-fit rounded-tr-lg bg-[#ebeff2]">
      <div className="flex w-[158px] items-center rounded-t-lg border border-b-0 border-[#e6e6e6] bg-white pt-[3px] shadow-xs">
        <button type="button" aria-label="Undo" className="flex w-[42px] justify-center text-[#1d1d1d]">
          <Glyph size={14}>
            <path d="M6.400 4 3 7.400l3.400 3.400M3 7.400H13a3.600 3.600 0 0 1 0 7.200H10.400" strokeWidth="2" />
          </Glyph>
        </button>
        <button type="button" aria-label="Redo" className="flex w-9 justify-center text-[#8c8c8c]">
          <Glyph size={14}>
            <path d="M13.600 4 17 7.400l-3.400 3.400M17 7.400H7a3.600 3.600 0 0 0 0 7.200H9.600" strokeWidth="1.8" />
          </Glyph>
        </button>
        <div className="ml-[6px] h-6 w-px bg-[#e2e2e2]" />
        <button
          type="button"
          aria-label="Zoom level"
          className="flex-1 pr-6 text-right font-['Inter',sans-serif] text-xs text-[#1d1d1d]"
        >
          11%
        </button>
      </div>
      <button type="button" aria-label="Expand" className="flex w-[37px] items-center justify-center pb-[6px] text-[#1d1d1d]">
        <ChevronRight size={16} strokeWidth={1.5} />
      </button>
    </div>
  );
}

function TldrawBadge() {
  return (
    <a
      href="#tldraw"
      className="mb-[3px] mr-[3px] flex h-8 w-24 items-stretch rounded-[4px] border-2 border-[#999b9e] font-['Inter',sans-serif] text-[#999b9e]"
    >
      <svg viewBox="0 0 28 28" className="w-7" fill="currentColor" aria-hidden="true">
        <circle cx="14" cy="8.5" r="3" />
        <path d="M14 15a3 3 0 0 1 3 3.2c0 2.600-1.400 4.400-3.600 5.300l-.9-1.300c1.100-.5 1.700-1.100 1.900-1.900A2.700 2.700 0 0 1 14 15Z" />
      </svg>
      <span className="flex flex-1 flex-col items-center justify-center border-l-2 border-[#999b9e]">
        <span className="text-[9px] font-semibold leading-[10px]">MADE WITH</span>
        <span className="text-[12px] font-extrabold leading-[13px]">TLDRAW</span>
      </span>
    </a>
  );
}

/* ---------- Posts panel ---------- */

function NumberDot({ n, className }: { n: number; className: string }) {
  return (
    <span className={`flex size-6 items-center justify-center rounded-full text-xs font-bold text-white ${className}`}>{n}</span>
  );
}

function Avatar({ letter }: { letter: string }) {
  return (
    <span className="flex size-4 shrink-0 items-center justify-center rounded-full bg-[#f5f5f4] text-xs font-normal text-[#1c1917]">
      {letter}
    </span>
  );
}

function PostFooter() {
  return (
    <div className="mt-2 flex items-center justify-between border-t border-[#e5e7eb] pb-[2px] pr-2 pt-[6px]">
      <button type="button" className="flex h-8 items-center gap-[10px] pl-[11px] text-xs font-medium text-[#0a0a0a]">
        <Reply size={14} />
        Reply in Chat
      </button>
      <span className="text-xs text-[#6b7280]">Sep 5</span>
    </div>
  );
}

function PostCard({ children }: { children: React.ReactNode }) {
  return (
    <article className="rounded-[14px] border border-[#e5e5e5] bg-white px-3 pb-3 pt-4 shadow-sm">{children}</article>
  );
}

function Author({ name }: { name: string }) {
  return (
    <div className="mt-2 flex h-4 items-center gap-2 text-xs leading-[18px] text-[#1e2939]">
      <Avatar letter={name[0]} />
      {name}
    </div>
  );
}

function PostsPanel() {
  return (
    <aside className="relative mb-[37px] mr-[21px] mt-8 flex w-[384px] shrink-0 flex-col rounded-lg border border-[#e5e5e5] bg-white shadow-xs">
      <div className="absolute left-[3px] top-1/2 h-8 w-[2px] -translate-y-4 bg-[#d1d5dc]" />
      <header className="flex h-[57px] items-center gap-2 border-b border-[#e5e5e5] pl-6 pr-5">
        <span className="size-2 rounded-full bg-[#00c950]" />
        <h2 className="flex-1 text-[15px] font-medium leading-6 text-[#0a0a0a]">Tower Foundation Plan</h2>
        <button type="button" aria-label="Close panel" className="text-[#0a0a0a]">
          <X size={16} strokeWidth={1.7} />
        </button>
      </header>

      <div className="flex flex-col gap-6 pb-4 pl-6 pr-4 pt-4">
        <div role="tablist" className="flex h-9 rounded-[10px] bg-[#f5f5f4] p-1 text-[13px] font-medium text-[#0a0a0a]">
          <button type="button" role="tab" aria-selected="false" className="flex-1">
            Versions
          </button>
          <button type="button" role="tab" aria-selected="true" className="flex-1 rounded-lg bg-white shadow-sm">
            Posts
          </button>
          <button type="button" role="tab" aria-selected="false" className="flex-1">
            Chat
          </button>
        </div>

        <div className="flex w-fit rounded-[10px] bg-[#f3f4f6] p-1 text-xs font-medium text-[#4a5565]">
          <button type="button" className="rounded-lg bg-white px-[11px] py-1.5 text-[#101828] shadow-sm">
            All (2)
          </button>
          <button type="button" className="px-[11px] py-1.5">
            Comments (1)
          </button>
          <button type="button" className="px-[11px] py-1.5">
            Tasks (1)
          </button>
        </div>

        <div className="flex flex-col gap-4 pr-2">
          <PostCard>
            <div className="flex items-center gap-2">
              <NumberDot n={3} className="bg-[#ff6900]" />
              <input
                type="checkbox"
                aria-label="Mark task as done"
                className="size-4 appearance-none rounded-[4px] border border-[#e0e0e0] bg-white shadow-xs"
              />
              <span className="flex h-[22px] items-center gap-2 rounded-md border border-[#ffd6a7] bg-[#ffedd4] px-2 text-xs font-medium text-[#ca3500]">
                <SquareCheckBig size={12} />
                Task
              </span>
            </div>
            <h3 className="mt-3 text-[13px] font-semibold leading-5 text-[#0a0a0a]">Remove chair</h3>
            <Author name="Marcus Rodriguez" />
            <div className="mt-2 flex h-[34px] items-center gap-2 rounded-lg border border-[#ffd6a7] bg-[#fff5eb] px-2 text-xs font-medium text-[#ca3500]">
              <UserCheck size={12} className="text-[#f54900]" />
              Assigned to:
              <span className="flex items-center gap-1 font-medium text-[#9f2d00]">
                <Avatar letter="S" />
                Sarah Chen
              </span>
            </div>
            <div className="mt-2 flex h-[34px] items-center gap-2 rounded-lg border border-[#bedbff] bg-[#eff6ff] px-2 text-xs font-medium text-[#1447e6]">
              <Calendar size={12} />
              Due Sep 19
            </div>
            <PostFooter />
          </PostCard>

          <PostCard>
            <div className="flex items-center gap-2">
              <NumberDot n={2} className="bg-[#2b7fff]" />
              <span className="flex h-[22px] items-center gap-2 rounded-md border border-[#bedbff] bg-[#dbeafe] px-2 text-xs font-medium text-[#1447e6]">
                <MessageSquare size={12} />
                Comment
              </span>
            </div>
            <h3 className="mt-3 text-[13px] font-semibold leading-5 text-[#0a0a0a]">
              Bed looks great! <span className="rounded-[4px] bg-[#8ec5ff] px-1 font-medium">@Sarah Chen</span>
            </h3>
            <Author name="Marcus Rodriguez" />
            <PostFooter />
          </PostCard>
        </div>
      </div>
    </aside>
  );
}

/* ---------- Page ---------- */

export default function App() {
  return (
    <div className="relative h-screen w-full overflow-hidden border-t border-[#444] bg-[#f9fafc] font-['Noto_Sans','Open_Sans',sans-serif] text-sm">
      <div className="absolute inset-0 overflow-hidden">
        <Sheet />
        <span className="absolute left-[838px] top-[139px] size-[2px] bg-[#ddd]" />
      </div>

      <div className="relative flex h-full items-stretch">
        <header className="flex flex-1 items-start justify-between pl-6 pr-3 pt-8">
          <div className="flex items-start gap-4">
            <button
              type="button"
              aria-label="Back"
              className="flex h-9 w-10 items-center justify-center rounded-lg bg-[#f5f5f4] text-[#1c1917] shadow-xs"
            >
              <ArrowLeft size={16} />
            </button>
            <button
              type="button"
              className="flex h-12 items-center gap-2 rounded-[10px] border border-[#e5e7eb] bg-white px-[11px] text-xs font-medium text-[#4a5565] shadow-sm"
            >
              <span className="size-[6px] rounded-full bg-[#99a1af]" />
              Set Status
            </button>
          </div>
          <div className="flex items-center gap-3 text-[13px] font-medium text-[#0a0a0a]">
            <button type="button" className="flex h-9 items-center gap-2 rounded-lg border border-[#e5e5e5] bg-white px-3 shadow-xs">
              <Share2 size={16} />
              Share
            </button>
            <button type="button" className="flex h-10 items-center gap-2 rounded-lg border border-[#e5e5e5] bg-white px-3 shadow-xs">
              <Smartphone size={16} />
              Mobile
            </button>
          </div>
        </header>
        <PostsPanel />
      </div>

      <footer className="absolute inset-x-0 bottom-0 grid grid-cols-[1fr_auto_1fr] items-end">
        <ZoomControls />
        <Toolbar />
        <div className="flex justify-end">
          <TldrawBadge />
        </div>
      </footer>

      <div className="pointer-events-none absolute bottom-[43px] right-[75px] w-[360px] whitespace-nowrap text-[#9a9a9a]/70">
        <p className="text-[24px] leading-8">Ativar o Windows</p>
        <p className="text-[17px] leading-7">Acesse Configurações para ativar o Windows.</p>
      </div>
    </div>
  );
}
